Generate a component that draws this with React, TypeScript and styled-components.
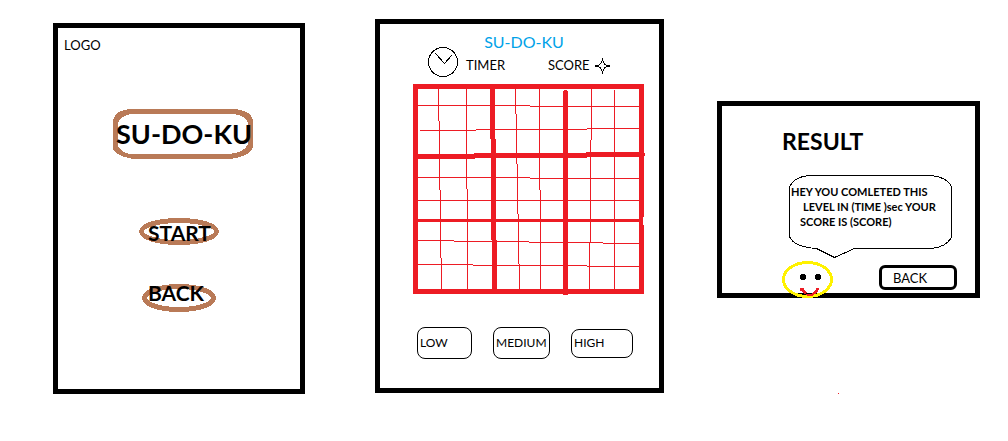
import React from "react";
import styled, { createGlobalStyle } from "styled-components";

const INK = "#000000";
const RED = "#ed1c24";
const BROWN = "#b97a57";
const SKY = "#00a2e8";
const YELLOW = "#fff200";

const GlobalStyle = createGlobalStyle`
  *, *::before, *::after { box-sizing: border-box; }
  body {
    margin: 0;
    background: #ffffff;
    color: ${INK};
    font-family: Lato, "Liberation Sans", sans-serif;
    font-size: 13px;
    line-height: 16px;
  }
  h1, h2, p { margin: 0; }
  svg { display: block; flex: none; overflow: visible; }
`;

const Board = styled.main`
  display: flex;
  align-items: flex-start;
  padding: 19px 28px 40px 53px;
`;

const Column = styled.div<{ $grow: number; $left?: number; $top?: number }>`
  flex: ${(p) => p.$grow} 1 0;
  min-width: 0;
  margin-left: ${(p) => p.$left ?? 0}px;
  margin-top: ${(p) => p.$top ?? 0}px;
`;

const Screen = styled.section<{ $pad: string }>`
  display: flex;
  flex-direction: column;
  border: 5px solid ${INK};
  padding: ${(p) => p.$pad};
`;

const Logo = styled.p`
  padding-left: 6px;
`;

const Menu = styled.div`
  display: flex;
  flex-direction: column;
  align-items: center;
  padding-top: 56px;
`;

const Stack = styled.div`
  display: grid;
  place-items: center;
  margin-left: 8px;
  margin-bottom: 59px;
  > * { grid-area: 1 / 1; }
`;

const BigTitle = styled.h1`
  padding-left: 2px;
  font-size: 27px;
  line-height: 32px;
  font-weight: 700;
  white-space: nowrap;
`;

const OvalButton = styled.button<{ $lift?: boolean }>`
  display: grid;
  align-items: ${(p) => (p.$lift ? "start" : "end")};
  border: 0;
  padding: 0;
  margin-bottom: 39px;
  background: none;
  color: ${INK};
  font: 700 21px/24px Lato, "Liberation Sans", sans-serif;
  text-align: left;
  cursor: pointer;
  > * { grid-area: 1 / 1; }
  > span {
    padding-left: ${(p) => (p.$lift ? 6 : 9)}px;
    margin-top: ${(p) => (p.$lift ? -3 : 0)}px;
  }
`;

const Game = styled.div`
  width: 232px;
  margin: 0 auto;
`;

const GameTitle = styled.h2`
  padding-right: 10px;
  font-size: 16px;
  line-height: 20px;
  font-weight: 400;
  color: ${SKY};
  text-align: center;
`;

const Status = styled.div`
  display: flex;
  align-items: center;
  margin: -5px 0 7px;
  padding-left: 15px;
`;

const StatusLabel = styled.span<{ $width: number }>`
  width: ${(p) => p.$width}px;
  padding-top: 6px;
  white-space: nowrap;
`;

const Timer = styled.div`
  display: flex;
  align-items: center;
  gap: 8px;
  width: 120px;
`;

const Score = styled.div`
  display: flex;
  align-items: center;
  gap: 7px;
  > svg { margin-top: 8px; }
`;

const Levels = styled.div`
  display: flex;
  align-items: center;
  justify-content: space-between;
  padding: 32px 12px 0 4px;
`;

const LevelButton = styled.button<{ $width: number; $height: number }>`
  width: ${(p) => p.$width}px;
  height: ${(p) => p.$height}px;
  padding: 0 0 0 2px;
  border: 1px solid ${INK};
  border-radius: 8px;
  background: none;
  color: ${INK};
  font: 400 12px/16px Lato, "Liberation Sans", sans-serif;
  text-align: left;
  white-space: nowrap;
  cursor: pointer;
`;

const ResultTitle = styled.h2`
  font-size: 23px;
  line-height: 30px;
  font-weight: 700;
`;

const Bubble = styled.div`
  display: grid;
  width: 163px;
  margin: 19px 0 3px 7px;
  > * { grid-area: 1 / 1; }
`;

const Message = styled.p`
  padding: 9px 0 0 2px;
  font-size: 11px;
  line-height: 15px;
  font-weight: 700;
  white-space: nowrap;
`;

const Line = styled.span<{ $indent?: number }>`
  display: block;
  padding-left: ${(p) => p.$indent ?? 0}px;
`;

const ResultFooter = styled.div`
  display: flex;
  align-items: flex-start;
  gap: 46px;
  margin-bottom: -5px;
`;

const BackButton = styled.button`
  width: 78px;
  height: 25px;
  margin-top: 4px;
  padding: 0 0 0 11px;
  border: 3px solid ${INK};
  border-radius: 6px;
  background: none;
  color: ${INK};
  font: 400 13px/16px Lato, "Liberation Sans", sans-serif;
  text-align: left;
  cursor: pointer;
`;

const Speck = styled.div`
  width: 1px;
  height: 1px;
  margin: 95px 0 0 121px;
  background: ${RED};
`;

const TitleFrame = () => (
  <svg width="140" height="50" shapeRendering="crispEdges" aria-hidden="true">
    <path
      d="M17 0H122Q138 2 140 11V38Q138 47 117 50H22Q8 49 0 41V11Q3 1 17 0ZM18 5Q7 7 5 14V37Q8 43 17 45H117Q132 43 135 35V14Q132 6 120 5Z"
      fill={BROWN}
      fillRule="evenodd"
    />
  </svg>
);

const Oval = ({ width, height }: { width: number; height: number }) => (
  <svg width={width} height={height} shapeRendering="crispEdges" aria-hidden="true">
    <ellipse
      cx={width / 2}
      cy={height / 2}
      rx={width / 2 - 2.5}
      ry={height / 2 - 2.5}
      fill="none"
      stroke={BROWN}
      strokeWidth="5"
    />
  </svg>
);

const Clock = () => (
  <svg width="30" height="30" shapeRendering="crispEdges" aria-hidden="true">
    <g fill="none" stroke={INK}>
      <circle cx="15" cy="15" r="14.5" />
      <path d="M7.500 6.500L16.500 16.500L23.500 8.500" />
    </g>
  </svg>
);

const Star = () => (
  <svg width="15" height="14" shapeRendering="crispEdges" aria-hidden="true">
    <path
      d="M7.500 0.500L9.500 5.500L14.500 7L9.500 8.500L7.500 13.500L5.500 8.500L0.500 7L5.500 5.500Z"
      fill="none"
      stroke={INK}
    />
  </svg>
);

// Hand-drawn rules: [x, y, width, height]; each one drifts a pixel at a time.
const strokes: number[][] = [
  [0, 0, 231, 5], [0, 205, 231, 5], [0, 0, 5, 210], [226, 0, 5, 210],
  [5, 21, 112, 1], [117, 22, 109, 1],
  [7, 46, 56, 1], [63, 45, 111, 1], [174, 44, 52, 1],
  [0, 70, 62, 5], [61, 69, 113, 5], [173, 68, 58, 5], [231, 69, 1, 3],
  [5, 93, 112, 1], [117, 94, 109, 1],
  [5, 116, 221, 1],
  [5, 135, 221, 3],
  [5, 156, 36, 1], [41, 157, 75, 1], [116, 158, 74, 1], [190, 159, 36, 1],
  [5, 180, 55, 1], [60, 181, 114, 1], [174, 182, 52, 1],
  [25, 5, 1, 32], [26, 37, 1, 69], [27, 106, 1, 68], [28, 174, 1, 31],
  [53, 5, 1, 100], [54, 105, 1, 100],
  [77, 5, 5, 50], [78, 55, 5, 101], [79, 156, 5, 49],
  [102, 5, 1, 25], [103, 30, 1, 50], [104, 80, 1, 50], [105, 130, 1, 50], [106, 180, 1, 25],
  [126, 5, 1, 101], [127, 106, 1, 99],
  [151, 6, 3, 1], [150, 7, 5, 204],
  [178, 5, 1, 51], [177, 56, 1, 102], [176, 158, 1, 47],
  [201, 6, 1, 199],
];

const SudokuSketch = () => (
  <svg width="232" height="211" shapeRendering="crispEdges" role="img" aria-label="Sudoku grid">
    {strokes.map(([x, y, w, h], i) => (
      <rect key={i} x={x} y={y} width={w} height={h} fill={RED} />
    ))}
    <rect x="230" y="133" width="1" height="8" fill="#ffffff" />
  </svg>
);

const BubbleOutline = () => (
  <svg width="163" height="83" shapeRendering="crispEdges" aria-hidden="true">
    <path
      d="M20.500 0.500H142.500Q160 3 162.500 12.500V62.500Q157 72 142.500 73.500H65.500L45.500 82.500L27.500 73.500Q5 72 0.500 61.500V12.500Q4 2 20.500 0.500Z"
      fill="none"
      stroke={INK}
    />
  </svg>
);

const Smiley = () => (
  <svg width="51" height="37" shapeRendering="crispEdges" role="img" aria-label="Smiling face">
    <ellipse cx="25.5" cy="18.500" rx="24" ry="17" fill="none" stroke={YELLOW} strokeWidth="3" />
    <path
      d="M20 28L22 31L26 33.500H30L34 31L36 27"
      fill="none"
      stroke={RED}
      strokeWidth="2.6"
      strokeLinejoin="round"
    />
    <path d="M24 32.500H30" stroke={INK} />
    <circle cx="20" cy="28.500" r="2" fill={RED} />
    <circle cx="21" cy="16" r="3" fill={INK} />
    <circle cx="36" cy="16" r="3" fill={INK} />
  </svg>
);

export default function App() {
  return (
    <>
      <GlobalStyle />
      <Board>
        <Column $grow={252} $top={4}>
          <Screen $pad="9px 0 38px">
            <Logo>LOGO</Logo>
            <Menu>
              <Stack>
                <TitleFrame />
                <BigTitle>SU-DO-KU</BigTitle>
              </Stack>
              <OvalButton type="button">
                <Oval width={80} height={27} />
                <span>START</span>
              </OvalButton>
              <OvalButton type="button" $lift>
                <Oval width={74} height={28} />
                <span>BACK</span>
              </OvalButton>
            </Menu>
          </Screen>
        </Column>

        <Column $grow={289} $left={70}>
          <Screen $pad="8px 0 29px 19px">
            <Game>
              <GameTitle>SU-DO-KU</GameTitle>
              <Status>
                <Timer>
                  <Clock />
                  <StatusLabel $width={38}>TIMER</StatusLabel>
                </Timer>
                <Score>
                  <StatusLabel $width={40}>SCORE</StatusLabel>
                  <Star />
                </Score>
              </Status>
              <SudokuSketch />
              <Levels>
                <LevelButton type="button" $width={55} $height={32}>LOW</LevelButton>
                <LevelButton type="button" $width={57} $height={32}>MEDIUM</LevelButton>
                <LevelButton type="button" $width={62} $height={29}>HIGH</LevelButton>
              </Levels>
            </Game>
          </Screen>
        </Column>

        <Column $grow={263} $left={53} $top={82}>
          <Screen $pad="20px 0 0 60px">
            <ResultTitle>RESULT</ResultTitle>
            <Bubble>
              <BubbleOutline />
              <Message>
                <Line>HEY YOU COMLETED THIS</Line>
                <Line $indent={12}>LEVEL IN (TIME )sec YOUR</Line>
                <Line $indent={9}>SCORE IS (SCORE)</Line>
              </Message>
            </Bubble>
            <ResultFooter>
              <Smiley />
              <BackButton type="button">BACK</BackButton>
            </ResultFooter>
          </Screen>
          <Speck />
        </Column>
      </Board>
    </>
  );
}
